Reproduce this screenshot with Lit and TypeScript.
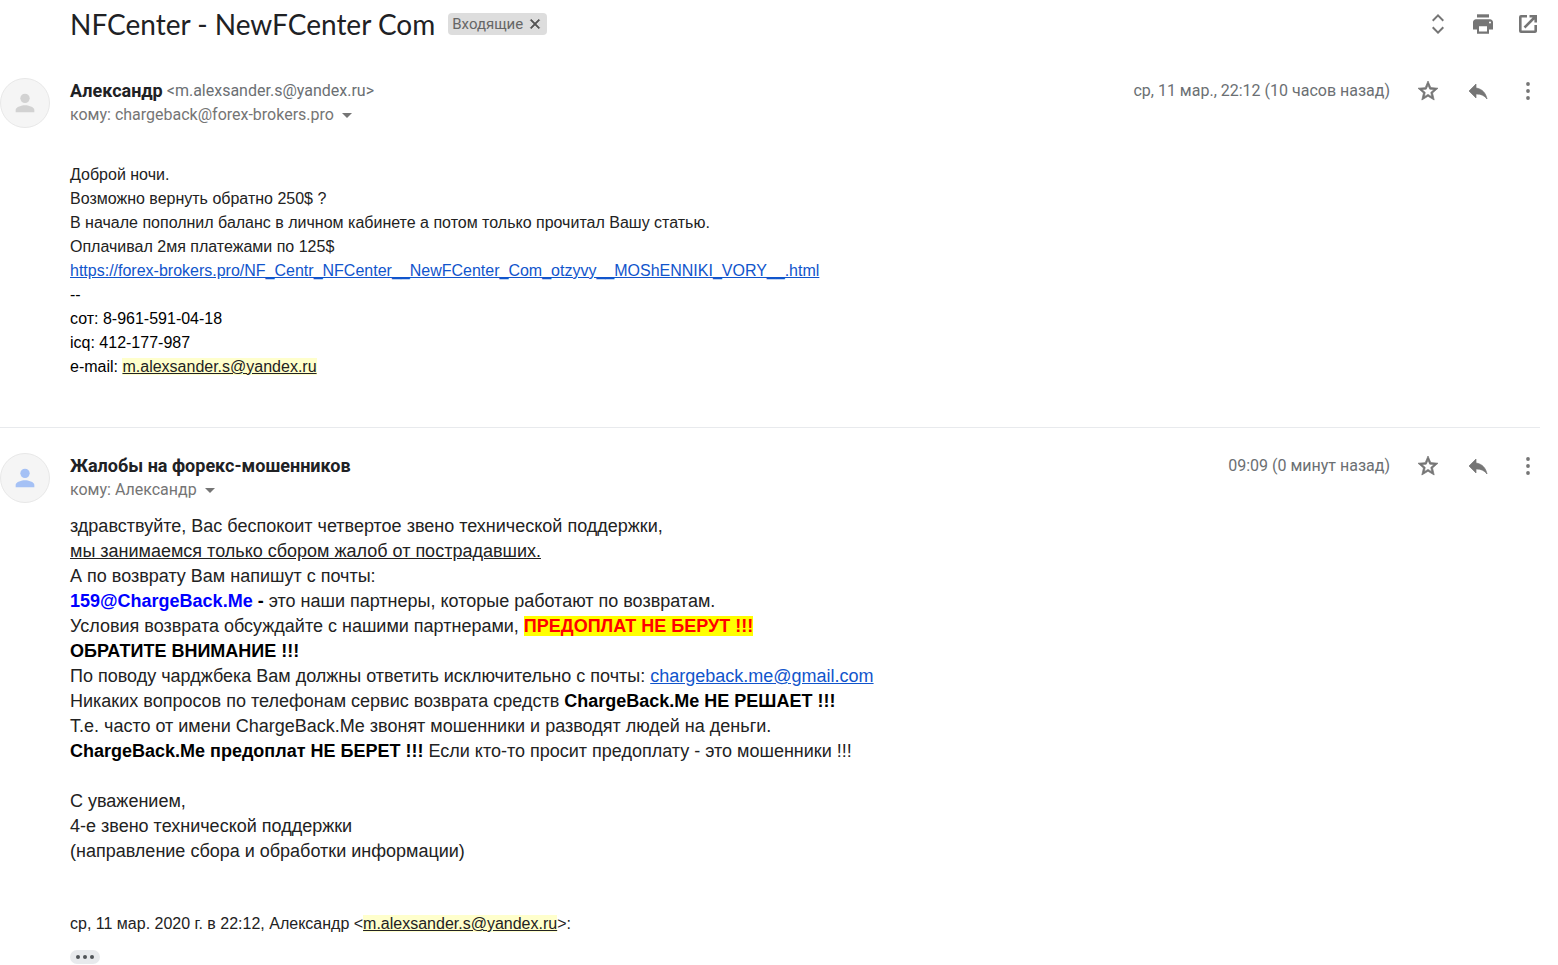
import { LitElement, html, css, svg } from "lit";
import { customElement, property } from "lit/decorators.js";

const icons = {
  unfold: svg`<path d="M12 2 6 8l1.41 1.41L12 4.83l4.59 4.58L18 8z"/><path d="m12 22 6-6-1.41-1.41L12 19.17l-4.59-4.58L6 16z"/>`,
  print: svg`<path d="M6 2.3h12v3.2H6z"/><path fill-rule="evenodd" d="M19 7.2H5c-1.66 0-3 1.34-3 3v7.3h4V21.7h12v-4.2h4v-7.3c0-1.66-1.34-3-3-3zM16 19.4H8v-5.2h8v5.2zM19 11.6a1 1 0 1 1 0-2 1 1 0 0 1 0 2z"/>`,
  open: svg`<path d="M18.4 18.4H5.6V5.6H11V3H5a2 2 0 0 0-2 2v14a2 2 0 0 0 2 2h14c1.1 0 2-.9 2-2v-6h-2.6v5.4zM13.5 3v2.6h3.1l-9 9 1.8 1.8 9-9v3.1H21V3h-7.5z"/>`,
  star: svg`<path stroke="currentColor" stroke-width=".7" d="m22 9.24-7.19-.62L12 2 9.19 8.63 2 9.24l5.46 4.73L5.82 21 12 17.27 18.18 21l-1.63-7.03L22 9.24zM12 15.4l-3.76 2.27 1-4.28-3.32-2.88 4.38-.38L12 6.1l1.71 4.04 4.38.38-3.32 2.88 1 4.28L12 15.4z"/>`,
  reply: svg`<path stroke="currentColor" stroke-width=".7" d="M10 9V5l-7 7 7 7v-4.1c5 0 8.5 1.6 11 5.1-1-5-4-10-11-11z"/>`,
  more: svg`<circle cx="12" cy="5" r="1.9"/><circle cx="12" cy="12" r="1.9"/><circle cx="12" cy="19" r="1.9"/>`,
  close: svg`<path d="M19 6.4 17.6 5 12 10.6 6.4 5 5 6.4l5.6 5.6L5 17.6 6.4 19l5.6-5.6 5.6 5.6 1.4-1.4-5.6-5.6z"/>`,
};

const icon = (shape: unknown) =>
  html`<svg viewBox="0 0 24 24" aria-hidden="true">${shape}</svg>`;

const shared = css`
  button {
    display: flex;
    align-items: center;
    justify-content: center;
    padding: 0;
    border: 0;
    background: none;
    color: #757575;
    font: inherit;
    cursor: pointer;
  }
  .icon {
    width: 24px;
    height: 24px;
  }
  svg {
    display: block;
    width: 100%;
    height: 100%;
    fill: currentColor;
  }
`;

@customElement("mail-message")
class MailMessage extends LitElement {
  @property() name = "";
  @property() address = "";
  @property() to = "";
  @property() date = "";
  @property() tint = "#d2d2d2";

  static styles = [
    shared,
    css`
      :host {
        display: grid;
        grid-template-columns: 50px minmax(0, 1fr);
        column-gap: 20px;
      }
      .avatar {
        box-sizing: border-box;
        width: 50px;
        height: 50px;
        padding: 10px;
        border: 1px solid #e8e8e8;
        border-radius: 50%;
        background: #f5f5f5;
      }
      .head {
        display: flex;
        justify-content: space-between;
        align-items: flex-start;
        padding-top: 1px;
        color: #6b6f73;
        font-size: 16px;
        line-height: 24px;
      }
      .from {
        display: flex;
        gap: 4px;
      }
      .name {
        margin: 0;
        color: #202124;
        font-size: 18px;
        font-weight: 700;
        line-height: 24px;
      }
      .to {
        gap: 8px;
      }
      .caret {
        border: 5px solid transparent;
        border-top-color: #757575;
        border-bottom: 0;
      }
      .actions {
        display: flex;
        align-items: center;
        gap: 26px;
      }
      .body {
        grid-column: 2;
      }
    `,
  ];

  render() {
    return html`
      <div class="avatar">
        <svg viewBox="0 0 24 24" style="fill:${this.tint}" aria-hidden="true">
          <circle cx="12" cy="8" r="4" />
          <path d="M12 14c-2.67 0-8 1.34-8 4v2h16v-2c0-2.66-5.33-4-8-4z" />
        </svg>
      </div>
      <header class="head">
        <div>
          <div class="from">
            <h2 class="name">${this.name}</h2>
            ${this.address ? html`<span>&lt;${this.address}&gt;</span>` : ""}
          </div>
          <button class="to"><span>кому: ${this.to}</span><span class="caret"></span></button>
        </div>
        <div class="actions">
          <time>${this.date}</time>
          <button class="icon" aria-label="Пометить">${icon(icons.star)}</button>
          <button class="icon" aria-label="Ответить">${icon(icons.reply)}</button>
          <button class="icon" aria-label="Ещё">${icon(icons.more)}</button>
        </div>
      </header>
      <div class="body"><slot></slot></div>
    `;
  }
}

@customElement("app-root")
class AppRoot extends LitElement {
  static styles = [
    shared,
    css`
      :host {
        display: block;
        background: #fff;
        font-family: Roboto, "Liberation Sans", sans-serif;
      }
      .thread {
        padding-right: 18px;
      }
      .top {
        display: flex;
        align-items: center;
        gap: 13px;
        height: 48px;
        padding-left: 70px;
      }
      h1 {
        margin: 0;
        color: #202124;
        font-family: Lato, sans-serif;
        font-size: 28px;
        font-weight: 400;
        line-height: 36px;
      }
      .label {
        display: flex;
        align-items: center;
        gap: 4px;
        height: 22px;
        padding: 0 4px;
        border-radius: 4px;
        background: #ddd;
        color: #666;
        font-size: 15px;
      }
      .remove {
        width: 16px;
        height: 16px;
        color: #555;
      }
      .remove svg {
        stroke: currentColor;
        stroke-width: 1;
      }
      .tools {
        display: flex;
        gap: 21px;
        margin-left: auto;
      }
      .first {
        padding: 30px 0 48px;
        border-bottom: 1px solid #e8eaed;
      }
      .second {
        padding-top: 25px;
      }
      .text {
        margin: 0;
        color: #222;
        font-family: "Liberation Sans", Arial, sans-serif;
        font-size: 16px;
        line-height: 24px;
      }
      .inquiry {
        padding-top: 35px;
      }
      .answer {
        padding-top: 11px;
        font-size: 18px;
        line-height: 25px;
      }
      .quote {
        padding-top: 48px;
      }
      .dark,
      .answer b {
        color: #000;
      }
      a {
        color: #15c;
      }
      .found {
        background: #ffc;
        color: #222;
      }
      .answer .partner {
        color: #00f;
      }
      .answer .alert {
        background: #ff0;
        color: #f00;
      }
      .trimmed {
        gap: 3px;
        width: 30px;
        height: 14px;
        margin-top: 14px;
        border-radius: 7px;
        background: #e8eaed;
      }
      .dot {
        width: 4px;
        height: 4px;
        border-radius: 50%;
        background: #505458;
      }
    `,
  ];

  render() {
    const sender = "m.alexsander.s@yandex.ru";
    const mail = html`<a class="found" href="mailto:${sender}">${sender}</a>`;
    const page =
      "https://forex-brokers.pro/NF_Centr_NFCenter__NewFCenter_Com_otzyvy__MOShENNIKI_VORY__.html";
    return html`
      <main class="thread">
        <header class="top">
          <h1>NFCenter - NewFCenter Com</h1>
          <span class="label">Входящие<button class="remove" aria-label="Удалить ярлык">${icon(icons.close)}</button></span>
          <div class="tools">
            <button class="icon" aria-label="Развернуть все">${icon(icons.unfold)}</button>
            <button class="icon" aria-label="Печать">${icon(icons.print)}</button>
            <button class="icon" aria-label="В новом окне">${icon(icons.open)}</button>
          </div>
        </header>

        <mail-message class="first" name="Александр" address=${sender}
          to="chargeback@forex-brokers.pro" date="ср, 11 мар., 22:12 (10 часов назад)">
          <p class="text inquiry">
            Доброй ночи.<br />
            Возможно вернуть обратно 250$ ?<br />
            В начале пополнил баланс в личном кабинете а потом только прочитал Вашу статью.<br />
            Оплачивал 2мя платежами по 125$<br />
            <a href=${page}>${page}</a>
          </p>
          <p class="text dark">
            --<br />
            сот: 8-961-591-04-18<br />
            icq: 412-177-987<br />
            e-mail: ${mail}
          </p>
        </mail-message>

        <mail-message class="second" name="Жалобы на форекс-мошенников" to="Александр"
          date="09:09 (0 минут назад)" tint="#a5c1f5">
          <p class="text answer">
            здравствуйте, Вас беспокоит четвертое звено технической поддержки,<br />
            <u>мы занимаемся только сбором жалоб от пострадавших.</u><br />
            А по возврату Вам напишут с почты:<br />
            <b class="partner">159@ChargeBack.Me</b><b> -</b> это наши партнеры, которые работают по возвратам.<br />
            Условия возврата обсуждайте с нашими партнерами, <b class="alert">ПРЕДОПЛАТ НЕ БЕРУТ !!!</b><br />
            <b>ОБРАТИТЕ ВНИМАНИЕ !!!</b><br />
            По поводу чарджбека Вам должны ответить исключительно с почты:
            <a href="mailto:chargeback.me@gmail.com">chargeback.me@gmail.com</a><br />
            Никаких вопросов по телефонам сервис возврата средств <b>ChargeBack.Me НЕ РЕШАЕТ !!!</b><br />
            Т.е. часто от имени ChargeBack.Me звонят мошенники и разводят людей на деньги.<br />
            <b>ChargeBack.Me предоплат НЕ БЕРЕТ !!!</b> Если кто-то просит предоплату - это мошенники !!!<br />
            <br />
            С уважением,<br />
            4-е звено технической поддержки<br />
            (направление сбора и обработки информации)
          </p>
          <p class="text quote">ср, 11 мар. 2020 г. в 22:12, Александр &lt;${mail}&gt;:</p>
          <button class="trimmed" aria-label="Показать сокращённый текст">
            <span class="dot"></span><span class="dot"></span><span class="dot"></span>
          </button>
        </mail-message>
      </main>
    `;
  }
}
